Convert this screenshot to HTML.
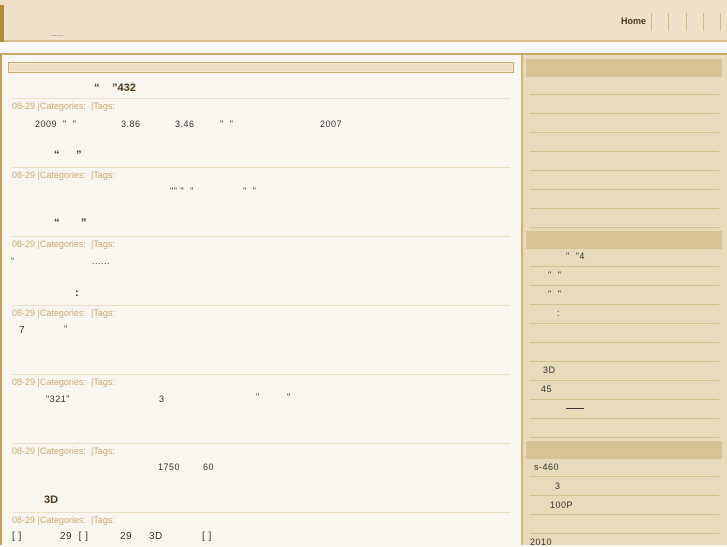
<!DOCTYPE html>
<html><head><meta charset="utf-8"><style>
*{margin:0;padding:0;box-sizing:border-box}
body{width:727px;height:545px;overflow:hidden;background:#f9f6ef;font-family:"Liberation Sans","Noto Sans CJK SC",sans-serif;position:relative;color:#333}
.a{position:absolute;white-space:pre;line-height:1}
#hd{position:absolute;left:0;top:0;width:727px;height:42px;background:#ede1c9;border-bottom:2px solid #d8c08e}
#strip{position:absolute;left:0;top:44px;width:727px;height:9px;background:#f7fafc}
#main{position:absolute;left:0;top:53px;width:727px;height:492px;border-top:2px solid #c9a86a;border-left:2px solid #c9a063;background:#f9f6ef}
#side{position:absolute;left:521px;top:55px;width:206px;height:490px;background:#e8dbbc;border-left:2px solid #cfb47c}
.sh{position:absolute;left:526px;width:196px;height:18px;background:#d6c292}
.sl{position:absolute;left:530px;width:189px;height:1px;background:#d5c090}
.pl{position:absolute;left:12px;width:498px;height:1px;background:#ecdfc6}
.meta{font-size:9px;color:#cda870}
.body{font-size:9px;color:#333;letter-spacing:0.5px}
.t{font-size:11px;font-weight:bold;color:#4a3516}
</style></head><body>
<div id="hd"></div>
<div style="position:absolute;left:0;top:5px;width:4px;height:37px;background:#b08a3c"></div>
<div class="a" style="left:50px;top:30px;font-size:8px;color:#777">......</div>
<div class="a" style="left:621px;top:17px;font-size:9px;font-weight:bold;color:#4a3516">Home</div>
<div style="position:absolute;left:651px;top:13px;width:1px;height:18px;background:#d2b884"></div>
<div style="position:absolute;left:668px;top:13px;width:1px;height:18px;background:#d2b884"></div>
<div style="position:absolute;left:686px;top:13px;width:1px;height:18px;background:#d2b884"></div>
<div style="position:absolute;left:703px;top:13px;width:1px;height:18px;background:#d2b884"></div>
<div style="position:absolute;left:720px;top:13px;width:1px;height:18px;background:#d2b884"></div>
<div id="strip"></div>
<div id="main"></div>
<div style="position:absolute;left:8px;top:62px;width:506px;height:11px;background:#ecdfc6;border:1px solid #c9ab72;outline:1px solid #f2e9d6;outline-offset:-2px"></div>
<div id="side"></div>
<div class="sh" style="top:59px"></div>
<div class="sh" style="top:231px"></div>
<div class="sh" style="top:441px"></div>
<div class="sl" style="top:94px"></div><div class="sl" style="top:113px"></div><div class="sl" style="top:132px"></div><div class="sl" style="top:151px"></div><div class="sl" style="top:170px"></div><div class="sl" style="top:189px"></div><div class="sl" style="top:208px"></div><div class="sl" style="top:227px"></div>
<div class="sl" style="top:266px"></div><div class="sl" style="top:285px"></div><div class="sl" style="top:304px"></div><div class="sl" style="top:323px"></div><div class="sl" style="top:342px"></div><div class="sl" style="top:361px"></div><div class="sl" style="top:380px"></div><div class="sl" style="top:399px"></div><div class="sl" style="top:418px"></div><div class="sl" style="top:437px"></div>
<div class="sl" style="top:476px"></div><div class="sl" style="top:495px"></div><div class="sl" style="top:514px"></div><div class="sl" style="top:533px"></div>
<div class="a body" style="left:566px;top:252px">"  "4</div>
<div class="a body" style="left:548px;top:271px">"  "</div>
<div class="a body" style="left:548px;top:290px">"  "</div>
<div class="a body" style="left:557px;top:309px">:</div>
<div class="a body" style="left:543px;top:366px">3D</div>
<div class="a body" style="left:541px;top:385px">45</div>
<div style="position:absolute;left:566px;top:408px;width:18px;height:1px;background:#333"></div>
<div class="a body" style="left:534px;top:463px">s-460</div>
<div class="a body" style="left:555px;top:482px">3</div>
<div class="a body" style="left:550px;top:501px">100P</div>
<div class="a body" style="left:530px;top:538px">2010</div>

<div class="a t" style="left:94px;top:83px">“</div><div class="a t" style="left:112px;top:83px">”432</div>
<div class="pl" style="top:98px"></div>
<div class="a meta" style="left:12px;top:102px">08-29 |Categories:</div><div class="a meta" style="left:91px;top:102px">|Tags:</div>
<div class="a body" style="left:35px;top:120px">2009  "  "</div>
<div class="a body" style="left:121px;top:120px">3.86</div>
<div class="a body" style="left:175px;top:120px">3.46</div>
<div class="a body" style="left:220px;top:120px">"  "</div>
<div class="a body" style="left:320px;top:120px">2007</div>
<div class="a t" style="left:54px;top:150px">“</div><div class="a t" style="left:76px;top:150px">”</div>
<div class="pl" style="top:167px"></div>
<div class="a meta" style="left:12px;top:171px">08-29 |Categories:</div><div class="a meta" style="left:91px;top:171px">|Tags:</div>
<div class="a body" style="left:170px;top:187px">"" "  "</div>
<div class="a body" style="left:243px;top:187px">"  "</div>
<div class="a t" style="left:54px;top:218px">“</div><div class="a t" style="left:81px;top:218px">”</div>
<div class="pl" style="top:236px"></div>
<div class="a meta" style="left:12px;top:240px">08-29 |Categories:</div><div class="a meta" style="left:91px;top:240px">|Tags:</div>
<div class="a body" style="left:11px;top:257px">“</div>
<div class="a body" style="left:92px;top:257px">......</div>
<div class="a t" style="left:75px;top:288px">:</div>
<div class="pl" style="top:305px"></div>
<div class="a meta" style="left:12px;top:309px">08-29 |Categories:</div><div class="a meta" style="left:91px;top:309px">|Tags:</div>
<div class="a body" style="left:19px;top:326px;font-size:10px">7</div>
<div class="a body" style="left:64px;top:325px">"</div>
<div class="pl" style="top:374px"></div>
<div class="a meta" style="left:12px;top:378px">08-29 |Categories:</div><div class="a meta" style="left:91px;top:378px">|Tags:</div>
<div class="a body" style="left:46px;top:395px">"321"</div>
<div class="a body" style="left:159px;top:395px">3</div>
<div class="a body" style="left:256px;top:393px">"</div>
<div class="a body" style="left:287px;top:393px">"</div>
<div class="pl" style="top:443px"></div>
<div class="a meta" style="left:12px;top:447px">08-29 |Categories:</div><div class="a meta" style="left:91px;top:447px">|Tags:</div>
<div class="a body" style="left:158px;top:463px">1750</div>
<div class="a body" style="left:203px;top:463px">60</div>
<div class="a t" style="left:44px;top:495px">3D</div>
<div class="pl" style="top:512px"></div>
<div class="a meta" style="left:12px;top:516px">08-29 |Categories:</div><div class="a meta" style="left:91px;top:516px">|Tags:</div>
<div class="a body" style="left:12px;top:532px;font-size:10px">[ ]</div>
<div class="a body" style="left:60px;top:532px;font-size:10px">29  [ ]</div>
<div class="a body" style="left:120px;top:532px;font-size:10px">29</div>
<div class="a body" style="left:149px;top:532px;font-size:10px">3D</div>
<div class="a body" style="left:202px;top:532px;font-size:10px">[ ]</div>
</body></html>
